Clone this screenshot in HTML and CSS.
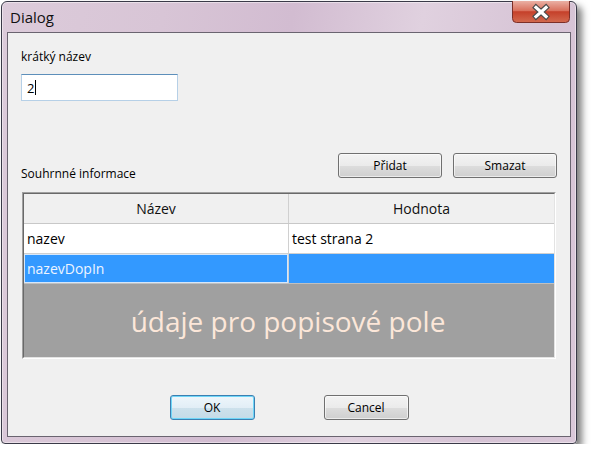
FILE: index.html
```html
<!DOCTYPE html>
<html lang="cs">
<head>
<meta charset="utf-8">
<title>Dialog</title>
<link rel="stylesheet" href="styles.css">
</head>
<body>
<div class="window">
  <div class="titlebar">
    <span class="title">Dialog</span>
    <div class="close">
      <svg width="58" height="22" viewBox="0 0 58 22">
        <defs>
          <linearGradient id="cg" x1="0" y1="0" x2="0" y2="1">
            <stop offset="0" stop-color="#eab0a4"/>
            <stop offset="0.45" stop-color="#d9705c"/>
            <stop offset="0.5" stop-color="#c5402a"/>
            <stop offset="1" stop-color="#d36a4f"/>
          </linearGradient>
        </defs>
        <path d="M0.5 0 V17.5 Q0.5 21.5 4.5 21.5 H53.5 Q57.5 21.5 57.5 17.5 V0" fill="url(#cg)" stroke="#7c2f28"/>
        <path d="M24 6.5 L34 15.5 M34 6.5 L24 15.5" stroke="#4a4a4a" stroke-width="5.5" stroke-linecap="square"/>
        <path d="M24 6.5 L34 15.5 M34 6.5 L24 15.5" stroke="#ffffff" stroke-width="3.2" stroke-linecap="square"/>
      </svg>
    </div>
  </div>
  <div class="client">
    <div class="label">krátký název</div>
    <div class="input"><span>2</span><span class="caret"></span></div>
    <div class="toolbar">
      <div class="label section">Souhrnné informace</div>
      <div class="actions">
        <button class="btn">Přidat</button>
        <button class="btn">Smazat</button>
      </div>
    </div>
    <div class="table">
      <div class="grid">
        <div class="row header">
          <div class="cell c1">Název</div>
          <div class="cell c2">Hodnota</div>
        </div>
        <div class="row">
          <div class="cell c1">nazev</div>
          <div class="cell c2">test strana 2</div>
        </div>
        <div class="row selected">
          <div class="cell c1 focus">nazevDopIn</div>
          <div class="cell c2"></div>
        </div>
        <div class="empty">údaje pro popisové pole</div>
      </div>
    </div>
    <div class="footer">
      <button class="btn default">OK</button>
      <button class="btn">Cancel</button>
    </div>
  </div>
</div>
</body>
</html>
```

FILE: styles.css
```css
* { box-sizing: border-box; }

body {
  margin: 0;
  background: #ffffff;
  font-family: "Open Sans", "Noto Sans", sans-serif;
  color: #000;
}

.window {
  margin: 1px 0 0 1px;
  width: 576px;
  height: 443px;
  border: 1px solid #3a3a48;
  border-radius: 6px 6px 4px 4px;
  background: linear-gradient(100deg, #dccbda 0%, #d8c5d6 25%, #d2bcd1 45%, #e0d1df 65%, #d6c3d5 85%, #dac8d9 100%);
  box-shadow: 5px 5px 7px rgba(0, 0, 0, 0.5), inset 0 0 0 1px rgba(255, 255, 255, 0.45);
  display: flex;
  flex-direction: column;
}

.titlebar {
  height: 30px;
  display: flex;
  align-items: flex-start;
  padding-left: 8px;
  flex: none;
}

.title {
  font-size: 15px;
  line-height: 20px;
  margin-top: 5px;
  color: #111;
}

.close {
  margin-left: auto;
  margin-right: 6px;
  margin-top: -1px;
  width: 58px;
  height: 22px;
}

.close svg { display: block; }

.client {
  margin: 0 5px;
  height: 405px;
  border: 1px solid #6a6470;
  background: #f0f0f0;
  padding: 16px 13px 0 13px;
  display: flex;
  flex-direction: column;
  flex: none;
}

.label {
  font-size: 12px;
  line-height: 16px;
  height: 16px;
}

.input {
  margin-top: 9px;
  width: 157px;
  height: 27px;
  background: #fff;
  border: 1px solid;
  border-color: #5d8fba #b6d0e7 #b6d0e7 #b6d0e7;
  display: flex;
  align-items: center;
  padding-left: 5px;
  font-size: 13px;
}

.caret {
  display: inline-block;
  width: 1px;
  height: 15px;
  background: #000;
  margin-left: 1px;
}

.toolbar {
  margin-top: 52px;
  height: 25px;
  display: flex;
  align-items: flex-start;
}

.section { margin-top: 13px; }

.actions {
  margin-left: auto;
  display: flex;
  gap: 11px;
}

.btn {
  width: 104px;
  height: 25px;
  border: 1px solid #707070;
  border-radius: 3px;
  background: linear-gradient(#f3f3f3 0%, #ebebeb 50%, #dddddd 51%, #cfcfcf 100%);
  font-family: "Open Sans", "Noto Sans", sans-serif;
  font-size: 12px;
  color: #000;
  padding: 0;
  box-shadow: inset 0 0 0 1px rgba(255, 255, 255, 0.6);
}

.table {
  margin-top: 14px;
  margin-left: 1px;
  width: 534px;
  height: 167px;
  border: 1px solid;
  border-color: #a0a0a0 #ffffff #ffffff #a0a0a0;
}

.grid {
  height: 100%;
  border: 1px solid;
  border-color: #696969 #e3e3e3 #e3e3e3 #696969;
  background: #a0a0a0;
  display: flex;
  flex-direction: column;
}

.row {
  display: flex;
  height: 30px;
  background: #fff;
  border-bottom: 1px solid #d0d0d0;
  flex: none;
}

.cell {
  font-size: 14px;
  line-height: 29px;
  padding-left: 3px;
  white-space: nowrap;
}

.c1 { width: 265px; border-right: 1px solid #d0d0d0; }
.c2 { width: 265px; }

.header { background: #f0f0f0; border-bottom-color: #c8c8c8; }
.header .cell { text-align: center; padding-left: 0; color: #111; }

.selected { background: #3399ff; border-bottom-color: #c0c0c0; }
.selected .cell { color: #eef5ff; }
.focus { box-shadow: inset 0 0 0 1px #d6e8fb; }

.empty {
  flex: 1;
  display: flex;
  align-items: center;
  justify-content: center;
  font-size: 28px;
  color: #fce7d9;
  padding-right: 2px;
}

.footer {
  margin-top: 36px;
  display: flex;
  justify-content: center;
  gap: 69px;
}

.footer .btn { width: 85px; }

.btn.default {
  border-color: #3c7fb1;
  background: linear-gradient(#eef6fb 0%, #e2eef6 50%, #cde1ec 51%, #c4dbe7 100%);
  box-shadow: inset 0 0 0 1px #6fd6f8;
}
```
